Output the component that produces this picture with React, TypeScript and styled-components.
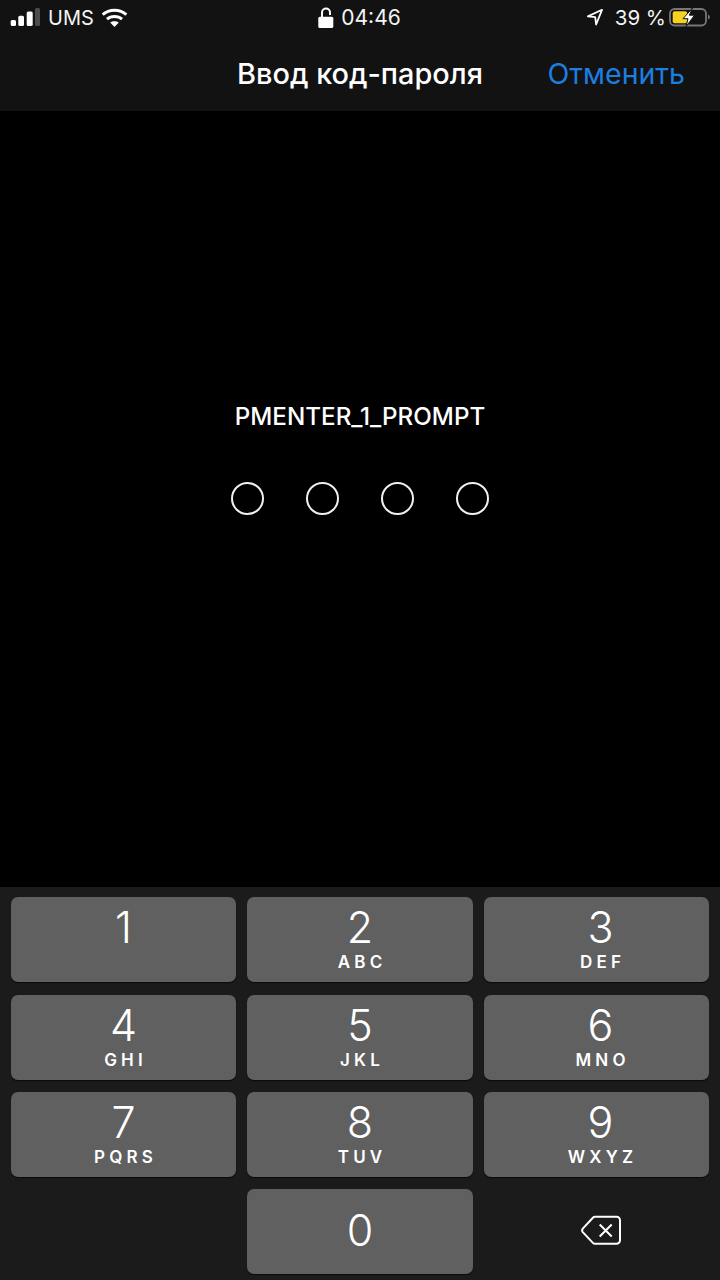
import React from "react";
import styled, { createGlobalStyle } from "styled-components";

const Global = createGlobalStyle`
  html, body { margin: 0; padding: 0; background: #000; }
  * { box-sizing: border-box; }
`;

const Page = styled.div`
  width: 720px;
  height: 1280px;
  display: flex;
  flex-direction: column;
  background: #000;
  color: #fff;
  font-family: Inter, "Liberation Sans", sans-serif;
  overflow: hidden;
`;

const Header = styled.header`
  height: 111px;
  background: #121212;
  flex: none;
`;

const StatusBar = styled.div`
  height: 35px;
  display: grid;
  grid-template-columns: 1fr auto 1fr;
  align-items: center;
  font-size: 20px;
  color: #f4f4f4;
`;

const StatusLeft = styled.div`
  display: flex;
  align-items: center;
  padding-left: 10px;
`;

const StatusCenter = styled.div`
  display: flex;
  align-items: center;
  gap: 7px;
  font-size: 21px;
  padding-right: 1px;
`;

const StatusRight = styled.div`
  display: flex;
  align-items: center;
  justify-content: flex-end;
  padding-right: 9px;
  font-size: 20.5px;
`;

const Carrier = styled.span`
  margin: 0 7px 0 8px;
`;

const Percent = styled.span`
  margin: 0 3px 0 11px;
`;

const StatusIcon = styled.svg`
  display: block;
  flex: none;
  margin-bottom: ${(p: { $lift?: number }) => p.$lift ?? 0}px;
`;

const NavBar = styled.nav`
  height: 76px;
  display: grid;
  grid-template-columns: 1fr auto 1fr;
  align-items: center;
`;

const Title = styled.h1`
  grid-column: 2;
  margin: 0;
  font-size: 28.9px;
  font-weight: 500;
`;

const Cancel = styled.span`
  justify-self: end;
  padding-right: 35px;
  font-size: 28.5px;
  font-weight: 400;
  color: #1c7ee0;
`;

const Main = styled.main`
  flex: 1;
  display: flex;
  flex-direction: column;
  align-items: center;
  padding-top: 292px;
`;

const Prompt = styled.div`
  font-size: 24.2px;
  font-weight: 500;
  line-height: 28px;
`;

const Dots = styled.div`
  margin-top: 51px;
  padding-right: 1px;
  display: flex;
  gap: 42px;
`;

const Dot = styled.span`
  width: 33px;
  height: 33px;
  border-radius: 50%;
  border: 2px solid #f0f0f0;
`;

const Keypad = styled.section`
  flex: none;
  height: 393px;
  padding: 10.3px 10.6px 0;
  background: #1b1b1b;
  display: grid;
  grid-template-columns: repeat(3, 1fr);
  grid-auto-rows: 85px;
  gap: 12.3px 10.8px;
`;

const Key = styled.div`
  border-radius: 7px;
  background: #606060;
  box-shadow: 0 1px 1px #0a0a0a;
  display: flex;
  flex-direction: column;
  align-items: center;
  padding-top: ${(p: { $zero?: boolean }) => (p.$zero ? "17px" : "6px")};
  &:nth-child(3n) {
    padding-left: 8px;
  }
`;

const Digit = styled.span`
  font-size: 43px;
  font-weight: 300;
  line-height: 48px;
`;

const Letters = styled.span`
  font-size: 17px;
  font-weight: 600;
  line-height: 18px;
  margin-top: 2px;
  letter-spacing: 4.2px;
  margin-right: -4.2px;
`;

const BlankKey = styled.div``;

const IconKey = styled.div`
  display: flex;
  align-items: center;
  justify-content: center;
  padding: 0 0 3px 9.4px;
`;

const keys: [string, string][] = [
  ["1", ""],
  ["2", "ABC"],
  ["3", "DEF"],
  ["4", "GHI"],
  ["5", "JKL"],
  ["6", "MNO"],
  ["7", "PQRS"],
  ["8", "TUV"],
  ["9", "WXYZ"],
];

const Signal = () => (
  <StatusIcon $lift={2} width="30" height="18" viewBox="0 0 30 18">
    <rect x="0.700" y="12" width="5.300" height="6" rx="1.500" fill="#fff" />
    <rect x="8.300" y="7.700" width="5.700" height="10.300" rx="1.500" fill="#fff" />
    <rect x="16.700" y="3.400" width="6" height="14.600" rx="1.500" fill="#fff" />
    <rect x="25" y="0" width="5" height="18" rx="1.500" fill="#4c4c4c" />
  </StatusIcon>
);

const Wifi = () => (
  <StatusIcon $lift={1} width="27" height="19" viewBox="0 0 27 19" fill="none" stroke="#fff" strokeWidth="3">
    <path d="M1.700 6.700C8.200.9 18.800.9 25.300 6.700" />
    <path d="M6 11.200C10 7.700 17 7.700 21 11.200" />
    <path d="M13.500 19L9.200 14.600C11.600 12.700 15.400 12.700 17.800 14.600Z" fill="#fff" stroke="none" />
  </StatusIcon>
);

const Lock = () => (
  <StatusIcon $lift={1} width="16" height="21" viewBox="0 0 16 21">
    <path d="M4 10V5.500a4 4 0 0 1 8 0V8" fill="none" stroke="#fff" strokeWidth="2" />
    <rect x="0.300" y="9.700" width="15" height="11.300" rx="1.500" fill="#fff" />
  </StatusIcon>
);

const Location = () => (
  <StatusIcon $lift={1} width="18" height="18" viewBox="0 0 18 18">
    <path d="M16 1.800L1.900 8.400l7.300.8.900 7.300z" fill="none" stroke="#fff" strokeWidth="1.800" strokeLinejoin="round" />
  </StatusIcon>
);

const Battery = () => (
  <StatusIcon $lift={1} width="42" height="21" viewBox="0 0 42 21">
    <rect x="1" y="2" width="36" height="16.500" rx="4.500" fill="none" stroke="#777" strokeWidth="1.800" />
    <rect x="3.700" y="4.300" width="14.500" height="12" rx="2" fill="#f6d31e" />
    <path d="M39 7.500v5c1.300-.4 1.800-1.400 1.800-2.500S40.300 7.900 39 7.500z" fill="#777" />
    <path d="M23.500 1L14 11.700h5l-2 8 8.500-11.500h-5.200z" fill="#fff" stroke="#121212" strokeWidth="1" />
  </StatusIcon>
);

const Backspace = () => (
  <svg width="42" height="31" viewBox="0 0 42 31" fill="none" stroke="#fff">
    <path
      d="M15 1.800h21.500A3.500 3.500 0 0 1 40 5.300v20a3.500 3.500 0 0 1-3.500 3.500H15a3 3 0 0 1-2.100-.9L3 17.400a3 3 0 0 1 0-4L12.900 2.700a3 3 0 0 1 2.100-.9z"
      strokeWidth="2"
    />
    <path d="M19.700 9.500l12 12M31.700 9.500l-12 12" strokeWidth="2" />
  </svg>
);

export default function App() {
  return (
    <Page>
      <Global />
      <Header>
        <StatusBar>
          <StatusLeft>
            <Signal />
            <Carrier>UMS</Carrier>
            <Wifi />
          </StatusLeft>
          <StatusCenter>
            <Lock />
            <span>04:46</span>
          </StatusCenter>
          <StatusRight>
            <Location />
            <Percent>39 %</Percent>
            <Battery />
          </StatusRight>
        </StatusBar>
        <NavBar>
          <Title>Ввод код-пароля</Title>
          <Cancel>Отменить</Cancel>
        </NavBar>
      </Header>
      <Main>
        <Prompt>PMENTER_1_PROMPT</Prompt>
        <Dots>
          <Dot />
          <Dot />
          <Dot />
          <Dot />
        </Dots>
      </Main>
      <Keypad>
        {keys.map(([digit, letters]) => (
          <Key key={digit}>
            <Digit>{digit}</Digit>
            {letters && <Letters>{letters}</Letters>}
          </Key>
        ))}
        <BlankKey />
        <Key $zero>
          <Digit>0</Digit>
        </Key>
        <IconKey>
          <Backspace />
        </IconKey>
      </Keypad>
    </Page>
  );
}
